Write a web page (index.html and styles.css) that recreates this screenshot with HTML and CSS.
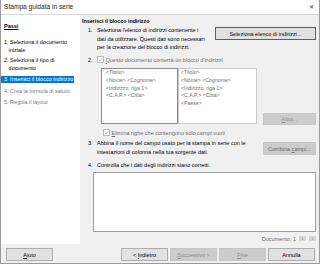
FILE: index.html
```html
<!DOCTYPE html>
<html lang="it">
  <head>
    <meta charset="UTF-8" />
    <title>Stampa guidata in serie</title>
    <link rel="stylesheet" href="styles.css">
  </head>
  <body>
    <div class="window">
      <div class="titlebar">
        <span class="title">Stampa guidata in serie</span>
        <span class="close">&#x2715;</span>
      </div>

      <div class="main">
        <!-- wizard steps -->
        <div class="steps">
          <div class="steps-head">Passi</div>
          <ul class="step-list">
            <li>1. Seleziona il documento<br>&nbsp;&nbsp;&nbsp;iniziale</li>
            <li>2. Seleziona il tipo di<br>&nbsp;&nbsp;&nbsp;documento</li>
            <li class="active"><span>3. Inserisci il blocco indirizzo</span></li>
            <li class="off">4. Crea la formula di saluto</li>
            <li class="off">5. Regola il layout</li>
          </ul>
        </div>

        <div class="content">
          <div class="page-title">Inserisci il blocco indirizzo</div>

          <div class="step step-one">
            <span class="num">1.</span>
            <div class="body row">
              <p class="text">Seleziona l'elenco di indirizzi contenente i dati da utilizzare. Questi dati sono necessari per la creazione del blocco di indirizzi.</p>
              <button class="btn btn-default btn-wide">Seleziona elenco di indirizzi...</button>
            </div>
          </div>

          <div class="step step-two">
            <span class="num">2.</span>
            <div class="body">
              <label class="check off">
                <svg class="box" width="7" height="7" viewBox="0 0 7 7"><rect x="0.5" y="0.5" width="6" height="6" fill="#fff" stroke="#bcbcbc"/><path d="M1.5 3.6 L2.9 5 L5.5 1.8" fill="none" stroke="#a8a8a8" stroke-width="0.8"/></svg>
                <span><u>Q</u>uesto documento conterrà un blocco d'indirizzi</span>
              </label>
              <div class="addr-row">
                <div class="addr-boxes">
                  <div class="addr selected">
                    <div>&lt;Titolo&gt;</div>
                    <div>&lt;Nome&gt; &lt;Cognome&gt;</div>
                    <div>&lt;Indirizzo, riga 1&gt;</div>
                    <div>&lt;C.A.P.&gt; &lt;Città&gt;</div>
                  </div>
                  <div class="addr">
                    <div>&lt;Titolo&gt;</div>
                    <div>&lt;Nome&gt; &lt;Cognome&gt;</div>
                    <div>&lt;Indirizzo, riga 1&gt;</div>
                    <div>&lt;C.A.P.&gt; &lt;Città&gt;</div>
                    <div>&lt;Paese&gt;</div>
                  </div>
                </div>
                <button class="btn btn-off btn-side"><u>A</u>ltro...</button>
              </div>
              <label class="check off check-empty">
                <svg class="box" width="7" height="7" viewBox="0 0 7 7"><rect x="0.5" y="0.5" width="6" height="6" fill="#fff" stroke="#bcbcbc"/><path d="M1.5 3.6 L2.9 5 L5.5 1.8" fill="none" stroke="#a8a8a8" stroke-width="0.8"/></svg>
                <span><u>E</u>limina righe che contengono solo campi vuoti</span>
              </label>
            </div>
          </div>

          <div class="step step-three">
            <span class="num">3.</span>
            <div class="body row">
              <p class="text">Abbina il nome del campo usato per la stampa in serie con le intestazioni di colonna nella tua sorgente dati.</p>
              <button class="btn btn-off btn-side btn-dim">Combina <u>c</u>ampi...</button>
            </div>
          </div>

          <div class="step step-four">
            <span class="num">4.</span>
            <div class="body">
              <p class="text">Controlla che i dati degli indirizzi siano corretti.</p>
            </div>
          </div>

          <div class="preview"></div>

          <div class="doc-nav">
            <span>Documento: 1</span>
            <span class="nav-btn">&#8249;</span>
            <span class="nav-btn">&#8250;</span>
          </div>
        </div>
      </div>

      <div class="footer">
        <button class="btn"><u>A</u>iuto</button>
        <div class="footer-right">
          <button class="btn">&lt; <u>I</u>ndietro</button>
          <button class="btn btn-off"><u>S</u>uccessivo &gt;</button>
          <button class="btn btn-off"><u>F</u>ine</button>
          <button class="btn">Annulla</button>
        </div>
      </div>
    </div>
  </body>
</html>
```

FILE: styles.css
```css
* {
    box-sizing: border-box;
}

body {
    margin: 0;
    font-family: "Liberation Sans", Arial, sans-serif;
    font-size: 5.5px;
    color: #000000;
}

p {
    margin: 0;
}

u {
    text-decoration: underline;
}

.window {
    width: 320px;
    height: 264px;
    background-color: #f0f0f0;
    border: 1px solid #9a9a9a;
    border-top: none;
    display: flex;
    flex-direction: column;
    overflow: hidden;
}

.titlebar {
    height: 15px;
    flex-shrink: 0;
    background-color: #ffffff;
    border-bottom: 1px solid #d9d9d9;
    display: flex;
    align-items: center;
    justify-content: space-between;
    padding: 0 5px 1px 3px;
}

.title {
    font-size: 6.6px;
    color: #1a1a1a;
}

.close {
    font-size: 6px;
    color: #333333;
}

.main {
    height: 229px;
    display: flex;
}

/* left column */
.steps {
    width: 79px;
    background-color: #ffffff;
    padding: 7px 0 0 3px;
}

.steps-head {
    font-weight: bold;
    text-decoration: underline;
    line-height: 8px;
    margin-bottom: 8px;
}

.step-list {
    list-style: none;
    margin: 0;
    padding: 0;
}

.step-list li {
    line-height: 8px;
    margin-bottom: 3px;
    white-space: nowrap;
}

.step-list li:first-child {
    margin-bottom: 2px;
}

.step-list li.active span {
    display: inline-block;
    background-color: #0078d7;
    color: #ffffff;
    line-height: 7px;
    margin: 0.5px 0 0.5px -3px;
    padding: 0 1px 0 3px;
}

.step-list li.off {
    color: #7a7a7a;
}

/* right column */
.content {
    flex: 1;
    padding: 2px 3px 0 2px;
    display: flex;
    flex-direction: column;
}

.page-title {
    font-weight: bold;
    font-size: 5.3px;
    line-height: 8px;
}

.step {
    display: flex;
    padding-left: 6px;
}

.num {
    width: 9px;
    flex-shrink: 0;
    line-height: 8.5px;
}

.body {
    flex: 1;
}

.row {
    display: flex;
    align-items: flex-start;
}

.text {
    flex: 1;
    line-height: 8.5px;
}

.step-one {
    margin-top: 1px;
}

.step-one .text {
    padding-right: 8px;
}

.step-two {
    margin-top: 4px;
}

.step-two .num {
    line-height: 8px;
}

.step-three {
    margin-top: 2.5px;
}

.step-three .text {
    padding-right: 6px;
}

.step-four {
    margin-top: 5px;
}

.check {
    display: flex;
    align-items: center;
    gap: 1.5px;
    line-height: 8px;
}

.check.off {
    color: #6d6d6d;
}

.check-empty {
    margin: 5px 0 0 6px;
}

.addr-row {
    display: flex;
    align-items: flex-end;
    justify-content: space-between;
    margin-top: 4px;
    padding-left: 4px;
}

.addr-boxes {
    display: flex;
    height: 56px;
}

.addr {
    width: 79px;
    background-color: #ffffff;
    border: 1px solid #c8c8c8;
    padding: 0.5px 2px;
    color: #6d6d6d;
    line-height: 7.8px;
    font-size: 5.2px;
}

.addr.selected {
    width: 77px;
    border-color: #8a8a8a;
    padding-left: 4px;
}

.btn {
    height: 13px;
    font-family: inherit;
    font-size: 5.5px;
    color: #000000;
    background-color: #e1e1e1;
    border: 1px solid #adadad;
    padding: 0;
    width: 47px;
}

.btn-default {
    border-color: #0078d7;
}

.btn-wide {
    width: 101px;
    margin-top: 1px;
}

.btn-side {
    width: 53px;
}

.btn-off {
    background-color: #cccccc;
    border-color: #c6c6c6;
    color: #8d8d8d;
}

.btn-dim {
    color: #666666;
}

.step-two .btn-side {
    height: 12px;
    margin-bottom: -1px;
}

.step-three .btn-side {
    margin-top: 3px;
}

.preview {
    height: 60px;
    margin: 2px 0 0 11px;
    background-color: #ffffff;
    border: 1px solid #a0a0a0;
}

.doc-nav {
    display: flex;
    justify-content: flex-end;
    align-items: center;
    gap: 3px;
    margin-top: 3px;
    line-height: 8px;
    color: #6d6d6d;
}

.nav-btn {
    width: 7px;
    height: 5px;
    background-color: #d4d4d4;
    color: #8a8a8a;
    font-size: 5px;
    line-height: 5px;
    text-align: center;
}

.footer {
    flex: 1;
    display: flex;
    justify-content: space-between;
    padding: 4px 4px 0 5px;
}

.footer-right {
    display: flex;
    gap: 2px;
}
```
